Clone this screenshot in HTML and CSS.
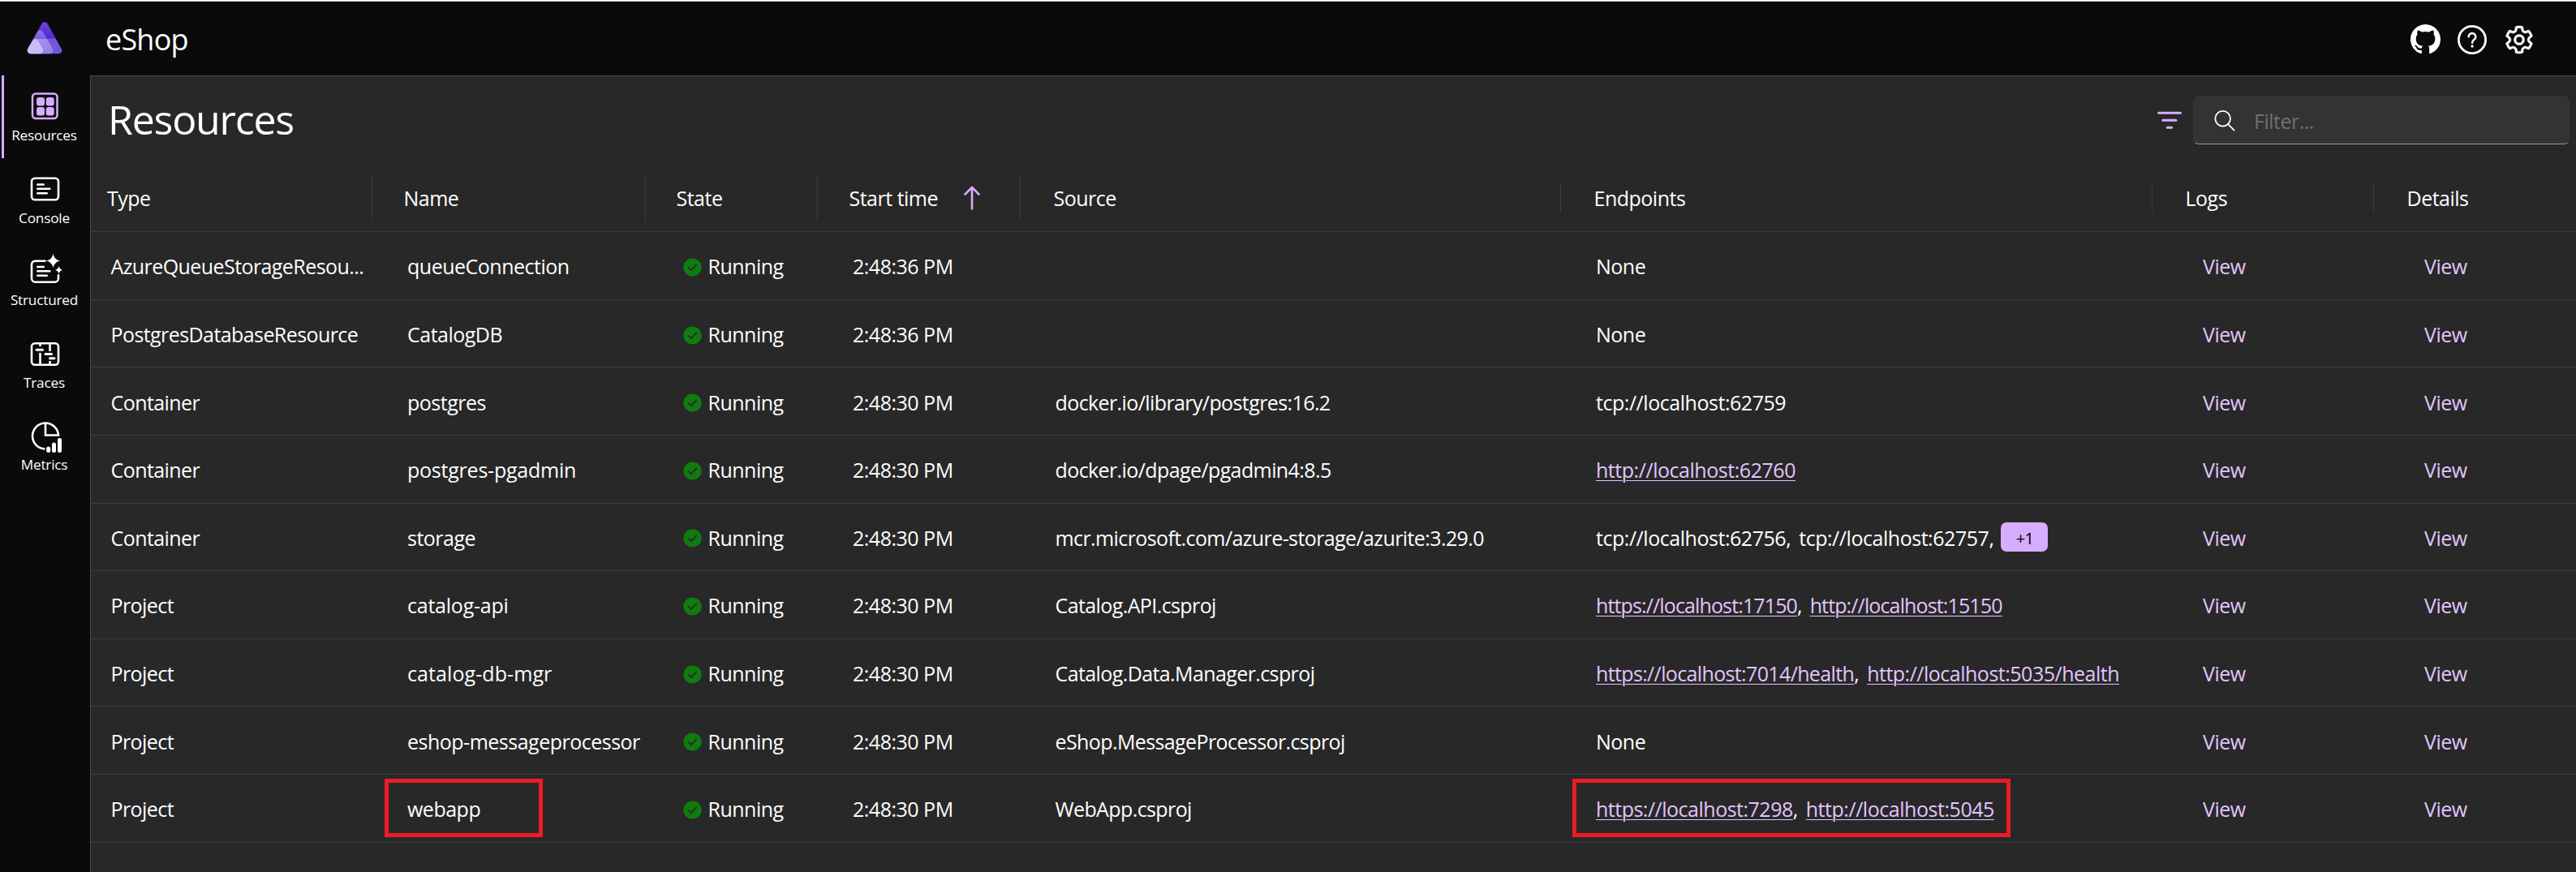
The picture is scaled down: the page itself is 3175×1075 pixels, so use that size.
FILE: index.html
```html
<!DOCTYPE html>
<html lang="en">
<head>
<meta charset="utf-8">
<title>eShop - Resources</title>
<link rel="stylesheet" href="styles.css">
</head>
<body>
<svg class="defs" aria-hidden="true">
  <symbol id="ok" viewBox="0 0 24 24"><circle cx="12" cy="12" r="11.6" fill="#107c10"/><path d="M7.2 12.6l3.200 3.200 6.600-7" fill="none" stroke="#282828" stroke-width="1.8" stroke-linecap="round" stroke-linejoin="round"/></symbol>
</svg>
<header class="topbar">
  <svg class="logo" viewBox="0 0 44 40">
    <defs>
      <linearGradient id="g1" x1="0" y1="0" x2="0" y2="1"><stop offset="0" stop-color="#6a45dd"/><stop offset=".5" stop-color="#512bd4"/><stop offset=".54" stop-color="#7455dd"/><stop offset="1" stop-color="#7455dd"/></linearGradient>
      <linearGradient id="g2" x1="0" y1="0" x2="0" y2="1"><stop offset="0" stop-color="#8f73e6"/><stop offset=".35" stop-color="#7d5fe0"/><stop offset=".39" stop-color="#a48ee8"/><stop offset="1" stop-color="#9780e5"/></linearGradient>
    </defs>
    <path fill="url(#g1)" d="M18.3 2.4a4.3 4.3 0 0 1 7.4 0L42.800 33.200a4 4 0 0 1-3.500 6H4.700a4 4 0 0 1-3.500-6z"/>
    <path fill="url(#g2)" d="M13.300 12.200a3.800 3.800 0 0 1 6.600 0L32 33.200a4 4 0 0 1-3.500 6H4.700a4 4 0 0 1-3.500-6z"/>
    <path fill="#c9bcf2" d="M7.200 22.900a3.800 3.800 0 0 1 6.600 0L19.800 33.200a4 4 0 0 1-3.500 6H4.700a4 4 0 0 1-3.500-6z"/>
  </svg>
  <h1 class="app">eShop</h1>
  <div class="actions">
    <svg class="gh" viewBox="0 0 16 16" fill="#fff"><path d="M8 0C3.580 0 0 3.580 0 8c0 3.540 2.290 6.530 5.470 7.590.4.070.55-.17.55-.38 0-.19-.010-.82-.010-1.490-2.010.37-2.530-.49-2.690-.94-.09-.23-.48-.94-.82-1.130-.28-.15-.68-.52-.010-.53.63-.010 1.080.58 1.230.82.72 1.210 1.870.87 2.330.66.070-.52.28-.87.510-1.070-1.780-.2-3.640-.89-3.640-3.950 0-.87.31-1.590.82-2.150-.08-.2-.36-1.020.08-2.120 0 0 .67-.21 2.200.82.64-.18 1.320-.27 2-.27s1.360.09 2 .27c1.530-1.040 2.200-.82 2.200-.82.44 1.100.16 1.920.08 2.120.51.56.82 1.270.82 2.150 0 3.070-1.870 3.750-3.650 3.950.29.25.54.73.54 1.480 0 1.070-.010 1.930-.010 2.200 0 .21.15.46.55.38A8.010 8.010 0 0 0 16 8c0-4.420-3.580-8-8-8z"/></svg>
    <svg class="help" viewBox="0 0 36 36" fill="none" stroke="#fff" stroke-linecap="round"><circle cx="18" cy="18" r="16.600" stroke-width="2.800"/><path d="M13.700 14.200a4.300 4.300 0 1 1 7 3.400c-1.700 1.300-2.600 2.200-2.600 4.200" stroke-width="2.500"/><circle cx="18.100" cy="26" r="1.700" fill="#fff" stroke="none"/></svg>
    <svg class="gear" viewBox="0 0 24 24" fill="#fff"><path d="M12.010 2.250c.74 0 1.470.1 2.180.25.320.070.550.330.590.650l.17 1.530a1.380 1.380 0 0 0 1.920 1.110l1.400-.61c.3-.13.640-.060.850.170a9.800 9.800 0 0 1 2.200 3.800c.1.300 0 .63-.26.820l-1.250.92a1.380 1.380 0 0 0 0 2.220l1.250.92c.26.190.36.520.27.820a9.800 9.800 0 0 1-2.200 3.800.75.75 0 0 1-.85.170l-1.410-.62a1.380 1.380 0 0 0-1.930 1.120l-.17 1.520a.75.75 0 0 1-.58.650 9.500 9.500 0 0 1-4.400 0 .75.75 0 0 1-.57-.65l-.17-1.520a1.380 1.380 0 0 0-1.930-1.110l-1.400.620a.75.75 0 0 1-.86-.18 9.800 9.800 0 0 1-2.200-3.800c-.1-.3.010-.63.270-.82l1.240-.92a1.380 1.380 0 0 0 0-2.220l-1.240-.92a.75.75 0 0 1-.28-.82 9.800 9.800 0 0 1 2.200-3.800c.23-.23.570-.3.860-.17l1.400.62c.4.170.86.150 1.250-.080.380-.22.630-.6.680-1.040l.17-1.530a.75.75 0 0 1 .58-.65c.72-.16 1.450-.25 2.200-.25zm0 1.500c-.45 0-.9.040-1.350.12l-.11.970a2.890 2.890 0 0 1-4.030 2.330l-.9-.4A8.300 8.300 0 0 0 4.280 9.100l.8.590a2.880 2.880 0 0 1 0 4.640l-.8.590c.3.840.76 1.630 1.350 2.330l.9-.4a2.880 2.880 0 0 1 4.020 2.330l.1.980c.9.150 1.800.15 2.700 0l.1-.98a2.880 2.880 0 0 1 4.020-2.320l.9.390a8.300 8.300 0 0 0 1.350-2.330l-.8-.59a2.880 2.880 0 0 1 0-4.640l.8-.59a8.300 8.300 0 0 0-1.350-2.320l-.9.390a2.880 2.880 0 0 1-4.020-2.320l-.11-.98c-.44-.08-.88-.12-1.330-.12zM12 8.250a3.750 3.750 0 1 1 0 7.500 3.750 3.750 0 0 1 0-7.500zm0 1.500a2.250 2.250 0 1 0 0 4.500 2.250 2.250 0 0 0 0-4.500z" stroke="#fff" stroke-width=".3"/></svg>
  </div>
</header>
<div class="shell">
  <nav class="side">
    <a class="nav on"><svg viewBox="0 0 40 40" fill="none" stroke="#d6adff"><rect x="5" y="4.500" width="30.500" height="30.500" rx="4" stroke-width="2.500"/><g fill="#d6adff" stroke="none"><rect x="10" y="9" width="10" height="10.500" rx="3"/><rect x="21.700" y="9" width="10" height="10.500" rx="3"/><rect x="10" y="21" width="10" height="10.500" rx="3"/><rect x="21.700" y="21" width="10" height="10.500" rx="3"/></g></svg><span>Resources</span></a>
    <a class="nav"><svg viewBox="0 0 40 40" fill="none" stroke="#fff" stroke-width="2.600" stroke-linecap="round"><rect x="4" y="6.800" width="33" height="26.500" rx="4"/><path d="M11.300 14.500h7.400M11.300 19.800h15M11.300 25.300h11.400"/></svg><span>Console</span></a>
    <a class="nav"><svg viewBox="0 0 40 40" fill="none" stroke="#fff" stroke-width="2.600" stroke-linecap="round"><path d="M20.500 7.700H8.500a4.500 4.500 0 0 0-4.500 4.500v17a4.500 4.500 0 0 0 4.500 4.500h24a4.500 4.500 0 0 0 4.500-4.500v-4"/><path d="M11.300 15h7.400M11.300 20.300h15M11.300 25.800h11.400"/><path fill="#fff" stroke="none" d="M30.500-1q1.500 7 8.500 8.500-7 1.500-8.500 8.500-1.500-7-8.500-8.500 7-1.500 8.500-8.500zM37.500 14q1 4 4.500 4.800-3.500 1-4.500 4.800-1-3.800-4.500-4.800 3.500-.8 4.500-4.800z"/></svg><span>Structured</span></a>
    <a class="nav"><svg viewBox="0 0 40 40" fill="none" stroke="#fff" stroke-width="2.600"><rect x="4" y="7.300" width="33" height="26.500" rx="4"/><path d="M14.500 8v3M14.500 19v15M26.500 8v9M26.500 29v5"/><path stroke-linecap="round" stroke-width="3" d="M10 15.300h7.500M21 20.500h7.500M26.500 25.800h5.500"/></svg><span>Traces</span></a>
    <a class="nav"><svg viewBox="0 0 40 40" fill="none" stroke="#fff" stroke-width="2.600"><path d="M20.500 36.500A16 16 0 1 1 37 19.500H21V4"/><path stroke-linecap="round" stroke-width="5" d="M24.700 36v2.500M31.500 31v7.500M38.500 25.500v13"/></svg><span>Metrics</span></a>
  </nav>
  <main class="main">
    <div class="bar">
      <h2>Resources</h2>
      <svg class="filter" viewBox="0 0 32 26" stroke="#d6adff" stroke-width="3" stroke-linecap="round"><path d="M1.500 2.300h27M6.700 11.300H23M12.200 20.300h5.400"/></svg>
      <div class="search"><svg viewBox="0 0 30 30" fill="none" stroke="#fff" stroke-width="1.900" stroke-linecap="round"><circle cx="12.500" cy="12" r="10"/><path d="M19.500 19.500l8 8"/></svg><span>Filter...</span></div>
    </div>
    <div class="head">
      <div>Type</div><div>Name</div><div>State</div><div>Start time<svg class="sort" viewBox="0 0 20 30" fill="none" stroke="#d6adff" stroke-width="2.600" stroke-linecap="round" stroke-linejoin="round"><path d="M10 28.500V2M1.500 10.500L10 1.800l8.500 8.700"/></svg></div><div class="short">Source</div><div class="short">Endpoints</div><div class="short">Logs</div><div>Details</div>
    </div>
    <div class="row"><div>AzureQueueStorageResou...</div><div>queueConnection</div><div><svg class="ok"><use href="#ok"/></svg>Running</div><div>2:48:36 PM</div><div></div><div>None</div><div><a>View</a></div><div><a>View</a></div></div>
    <div class="row"><div>PostgresDatabaseResource</div><div>CatalogDB</div><div><svg class="ok"><use href="#ok"/></svg>Running</div><div>2:48:36 PM</div><div></div><div>None</div><div><a>View</a></div><div><a>View</a></div></div>
    <div class="row"><div>Container</div><div>postgres</div><div><svg class="ok"><use href="#ok"/></svg>Running</div><div>2:48:30 PM</div><div>docker.io/library/postgres:16.2</div><div class="loose">tcp://localhost:62759</div><div><a>View</a></div><div><a>View</a></div></div>
    <div class="row"><div>Container</div><div class="dash">postgres-pgadmin</div><div><svg class="ok"><use href="#ok"/></svg>Running</div><div>2:48:30 PM</div><div>docker.io/dpage/pgadmin4:8.5</div><div class="loose"><a class="url">http://localhost:62760</a></div><div><a>View</a></div><div><a>View</a></div></div>
    <div class="row"><div>Container</div><div>storage</div><div><svg class="ok"><use href="#ok"/></svg>Running</div><div>2:48:30 PM</div><div>mcr.microsoft.com/azure-storage/azurite:3.29.0</div><div class="loose"><span>tcp://localhost:62756,</span><span class="next">tcp://localhost:62757,</span><span class="more">+1</span></div><div><a>View</a></div><div><a>View</a></div></div>
    <div class="row"><div>Project</div><div class="dash">catalog-api</div><div><svg class="ok"><use href="#ok"/></svg>Running</div><div>2:48:30 PM</div><div>Catalog.API.csproj</div><div class="tight"><a class="url">https://localhost:17150</a>,<a class="url next">http://localhost:15150</a></div><div><a>View</a></div><div><a>View</a></div></div>
    <div class="row"><div>Project</div><div class="dash wide">catalog-db-mgr</div><div><svg class="ok"><use href="#ok"/></svg>Running</div><div>2:48:30 PM</div><div>Catalog.Data.Manager.csproj</div><div><a class="url snug">https://localhost:7014/health</a>,<a class="url next">http://localhost:5035/health</a></div><div><a>View</a></div><div><a>View</a></div></div>
    <div class="row"><div>Project</div><div>eshop-messageprocessor</div><div><svg class="ok"><use href="#ok"/></svg>Running</div><div>2:48:30 PM</div><div>eShop.MessageProcessor.csproj</div><div>None</div><div><a>View</a></div><div><a>View</a></div></div>
    <div class="row"><div>Project</div><div class="mark mark-name">webapp</div><div><svg class="ok"><use href="#ok"/></svg>Running</div><div>2:48:30 PM</div><div>WebApp.csproj</div><div class="mark mark-url"><a class="url">https://localhost:7298</a>,<a class="url next loose">http://localhost:5045</a></div><div><a>View</a></div><div><a>View</a></div></div>
  </main>
</div>
</body>
</html>
```
FILE: styles.css
```css
*, *::after { box-sizing: border-box; }
body { margin: 0; width: 3175px; height: 1075px; overflow: hidden; background: #0a0a0a; color: #fff; font: 25px/36px "Open Sans", "Noto Sans", sans-serif; letter-spacing: -0.5px; display: flex; flex-direction: column; }
h1, h2 { margin: 0; font-weight: 400; }
.defs { position: absolute; width: 0; height: 0; }
.topbar { height: 93px; flex: none; border-top: 1px solid #fff; box-shadow: inset 0 1px #c9cccf; display: flex; align-items: center; padding: 1px 49px 0 33px; }
.logo { width: 44px; height: 40px; margin-top: -1px; }
.app { margin: 3px 0 0 53px; font-size: 36px; line-height: 48px; letter-spacing: -0.8px; }
.actions { margin-left: auto; padding-top: 2px; display: flex; align-items: center; }
.gh { width: 37px; height: 37px; margin-right: 21px; }
.help { width: 36px; height: 36px; margin-right: 19px; }
.gear { width: 42px; height: 42px; }
.shell { flex: 1; min-height: 0; display: flex; }
.side { width: 111px; flex: none; display: flex; flex-direction: column; }
.nav { height: 101.5px; display: flex; flex-direction: column; align-items: center; margin-left: 2px; padding: 18px 7px 0 0; border-left: 3px solid transparent; font-size: 17.2px; line-height: 24px; letter-spacing: -0.2px; }
.nav svg { width: 40px; height: 40px; overflow: visible; margin-bottom: 4px; }
.nav.on { border-left-color: #d6adff; }
.main { flex: 1; min-width: 0; background: #282828; border-top: 1px solid #4a4a4a; border-left: 1px solid #4a4a4a; }
.bar { height: 106px; display: flex; align-items: flex-start; padding: 25px 8px 0 21px; }
.bar h2 { font-size: 50px; line-height: 60px; margin-top: -2px; letter-spacing: -1.2px; }
.filter { width: 32px; height: 26px; margin: 18px 12px 0 auto; }
.search { width: 464px; height: 59px; background: #333; border: 1px solid #383838; border-bottom-color: #9a9a9a; border-radius: 7px; display: flex; align-items: center; padding-left: 24px; gap: 22px; color: #6f6f6f; }
.search svg { width: 28px; height: 28px; }
.head, .row { border-bottom: 1px solid #3c3c3c; display: grid; grid-template-columns: 347px 337px 212px 250px 666px 729px 273px 249px; }
.head > div, .row > div { display: flex; align-items: center; white-space: nowrap; }
.head { height: 86.2px; padding-top: 3px; align-items: center; }
.head > div { height: 58px; padding-left: 38.5px; border-right: 1px solid #3c3c3c; }
.head > div:first-child { padding-left: 20px; }
.head > div:nth-child(3) { padding-left: 37.5px; }
.head > div:last-child { border-right: 0; }
.head > .short { height: 36px; }
.head > div:nth-child(n+5) { padding-left: 40.5px; }
.sort { width: 20px; height: 30px; margin-left: 31.5px; }
.row { height: 83.6px; }
.row > div { padding: 2px 0 0 43px; }
.row > div:first-child { padding-left: 24.5px; letter-spacing: -0.58px; }
.row > div:nth-child(3) { padding-left: 46px; }
.row > div:nth-child(5) { letter-spacing: -0.6px; padding-left: 42.5px; }
.row > div:nth-child(n+7) { padding-left: 62px; }
.row a { color: #e3c4ff; }
.ok { width: 23px; height: 23px; margin: 2px 7.5px 0 0; }
.url { text-decoration: underline; text-decoration-thickness: 1px; text-underline-offset: 3px; }
.next { margin-left: 10px; }
.loose { letter-spacing: -0.46px; }
.tight { letter-spacing: -0.87px; }
.snug { letter-spacing: -0.64px; }
.row > .dash { letter-spacing: -0.23px; }
.row > .dash.wide { letter-spacing: 0.08px; }
.more { width: 58px; height: 36px; margin: -2px 0 0 9px; padding-top: 4px; background: #d6adff; border-radius: 7px; color: #000; font-size: 20px; line-height: 32px; text-align: center; letter-spacing: -0.8px; }
/* red highlight frames drawn over the webapp row */
.mark { position: relative; }
.mark::after { content: ""; position: absolute; top: 5px; height: 72px; border: 5px solid #ed1c24; }
.mark-name::after { left: 15px; width: 195px; }
.mark-url::after { left: 14px; width: 540px; }
```
